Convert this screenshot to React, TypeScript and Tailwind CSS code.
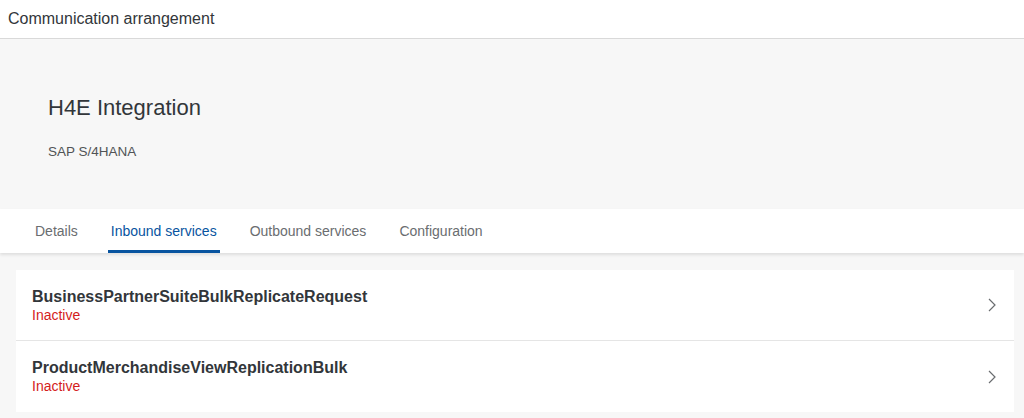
import React from "react";

const tabs = ["Details", "Inbound services", "Outbound services", "Configuration"];

const services = [
  { name: "BusinessPartnerSuiteBulkReplicateRequest", status: "Inactive" },
  { name: "ProductMerchandiseViewReplicationBulk", status: "Inactive" },
];

const Chevron = () => (
  <svg width="8" height="14" viewBox="0 0 8 14" fill="none">
    <path d="M1 1l6 6-6 6" stroke="#6a6d70" strokeWidth="1.2" />
  </svg>
);

export default function App() {
  return (
    <div className="h-[418px] overflow-hidden bg-[#f7f7f7] font-['Liberation_Sans',Arial,sans-serif] text-[#32363a]">
      <header className="h-[39px] bg-white border-b border-[#d9d9d9] flex items-center px-2">
        <span className="text-[16px]">Communication arrangement</span>
      </header>

      <section className="h-[170px] px-12 pt-[56px]">
        <h1 className="text-[22px] leading-[26px]">H4E Integration</h1>
        <p className="mt-[21px] text-[13.5px] text-[#515456]">SAP S/4HANA</p>
      </section>

      <nav className="h-[44px] bg-white flex gap-[27px] px-[32px] shadow-[0_2px_3px_rgba(0,0,0,0.1)]">
        {tabs.map((tab, i) => (
          <div
            key={tab}
            className={`px-[3px] pt-[4px] flex items-center text-[14px] border-b-[3px] ${
              i === 1 ? "text-[#0854a0] border-[#0854a0]" : "text-[#6a6d70] border-transparent"
            }`}
          >
            {tab}
          </div>
        ))}
      </nav>

      <ul className="mt-[17px] ml-4 mr-[10px] bg-white">
        {services.map((s, i) => (
          <li
            key={s.name}
            className={`h-[71px] flex items-center pl-4 pr-[18px] ${i === 0 ? "border-b border-[#e5e5e5]" : ""}`}
          >
            <div className="flex-1">
              <div className="text-[16px] font-bold leading-[20px] text-[#32363a]">{s.name}</div>
              <div className="text-[14px] leading-[17px] text-[#d41c1c]">{s.status}</div>
            </div>
            <Chevron />
          </li>
        ))}
      </ul>
    </div>
  );
}
